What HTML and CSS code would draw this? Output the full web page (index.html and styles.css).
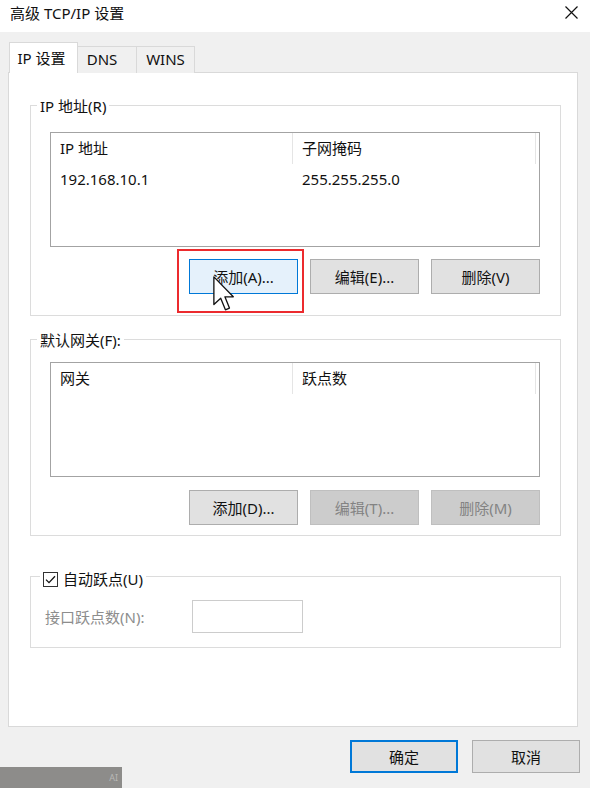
FILE: index.html
```html
<!DOCTYPE html>
<html>
  <head>
    <meta charset="utf-8" />
    <title>高级 TCP/IP 设置</title>
    <link rel="stylesheet" href="styles.css">
  </head>
  <body>
    <div class="window">
      <div class="titlebar">
        <span class="title">高级 TCP/IP 设置</span>
        <svg class="close" width="13" height="13" viewBox="0 0 13 13">
          <path d="M0.5 0.5 L12.5 12.5 M12.5 0.5 L0.5 12.5" stroke="#111" stroke-width="1.2" />
        </svg>
      </div>

      <div class="tabs">
        <div class="tab active">IP 设置</div>
        <div class="tab tab-dns">DNS</div>
        <div class="tab tab-wins">WINS</div>
      </div>

      <div class="panel">
        <div class="group group-ip">
          <div class="group-title"><span>IP 地址(R)</span></div>
          <div class="listview">
            <div class="lv-header">
              <div class="col">IP 地址</div>
              <div class="col">子网掩码</div>
            </div>
            <div class="lv-row">
              <div class="col">192.168.10.1</div>
              <div class="col">255.255.255.0</div>
            </div>
          </div>
          <div class="btn-row">
            <div class="btn-wrap">
              <button class="btn hot">添加(A)...</button>
              <div class="callout"></div>
              <svg class="cursor" width="21" height="35" viewBox="0 0 12 20">
                <path d="M0.5 0.5 V16.3 L4.4 12.7 L7.1 19.3 L9.4 18.3 L6.8 11.9 H11.6 Z" fill="#fff" stroke="#111" stroke-width="0.75" stroke-linejoin="round" />
              </svg>
            </div>
            <button class="btn">编辑(E)...</button>
            <button class="btn">删除(V)</button>
          </div>
        </div>

        <div class="group group-gw">
          <div class="group-title"><span>默认网关(F):</span></div>
          <div class="listview">
            <div class="lv-header">
              <div class="col">网关</div>
              <div class="col">跃点数</div>
            </div>
          </div>
          <div class="btn-row">
            <button class="btn">添加(D)...</button>
            <button class="btn" disabled>编辑(T)...</button>
            <button class="btn" disabled>删除(M)</button>
          </div>
        </div>

        <div class="group group-metric">
          <div class="group-title">
            <span class="check-label">
              <svg class="checkbox" width="15" height="15" viewBox="0 0 15 15">
                <rect x="0.5" y="0.5" width="14" height="14" fill="#fff" stroke="#333" />
                <path d="M3 7.6 L6 10.6 L12 4.2" fill="none" stroke="#111" stroke-width="1.3" />
              </svg>
              自动跃点(U)
            </span>
          </div>
          <div class="metric-row">
            <span class="metric-label">接口跃点数(N):</span>
            <div class="metric-input"></div>
          </div>
        </div>
      </div>

      <div class="footer">
        <button class="btn dlg default">确定</button>
        <button class="btn dlg">取消</button>
      </div>

      <div class="watermark"><span>AI</span></div>
    </div>
  </body>
</html>
```

FILE: styles.css
```css
body {
  margin: 0;
  background: #f0f0f0;
  font-family: "Noto Sans", "Noto Sans CJK SC", sans-serif;
  font-size: 15px;
  color: #111;
}
.window {
  position: relative;
  width: 590px;
  height: 788px;
  overflow: hidden;
}
.titlebar {
  height: 32px;
  background: #fff;
  display: flex;
  justify-content: space-between;
  align-items: flex-start;
}
.title {
  padding-left: 10px;
  line-height: 26px;
}
.close {
  margin: 6px 12px 0 0;
}

/* tabs */
.tabs {
  display: flex;
  align-items: flex-end;
  margin-top: 10px;
  margin-bottom: -1px;
  padding-left: 9px;
}
.tab {
  box-sizing: border-box;
  height: 27px;
  line-height: 25px;
  text-align: center;
  border-top: 1px solid #d9d9d9;
  border-right: 1px solid #d9d9d9;
  background: #f0f0f0;
}
.tab.active {
  position: relative;
  width: 69px;
  height: 31px;
  line-height: 30px;
  padding-right: 4px;
  background: #fff;
  border-left: 1px solid #d9d9d9;
}
.tab-dns {
  width: 59px;
  padding-right: 10px;
}
.tab-wins {
  width: 58px;
}

.panel {
  box-sizing: border-box;
  margin-left: 8px;
  width: 570px;
  height: 655px;
  background: #fff;
  border: 1px solid #d9d9d9;
  padding: 32px 16px 0 21px;
}

/* group boxes */
.group {
  border: 1px solid #dcdcdc;
  padding: 0 20px 21px 19px;
}
.group-title {
  display: flex;
  height: 21px;
  margin: -10px 0 0 -13px;
}
.group-title span {
  background: #fff;
  padding: 0 3px;
  line-height: 21px;
}
.group-gw {
  margin-top: 23px;
  padding-bottom: 10px;
}
.group-metric {
  margin-top: 40px;
  padding: 0 20px 14px 14px;
}
.group-metric .group-title {
  margin: -8px 0 0 -5px;
}
.check-label {
  display: flex;
  align-items: center;
  gap: 5px;
}

/* list views */
.listview {
  box-sizing: border-box;
  height: 115px;
  margin-top: 15px;
  border: 1px solid #a3a3a3;
}
.group-gw .listview {
  margin-top: 11px;
}
.lv-header,
.lv-row {
  display: flex;
}
.lv-header .col {
  height: 31px;
  line-height: 31px;
  border-right: 1px solid #e5e5e5;
}
.lv-row .col {
  height: 30px;
  line-height: 30px;
}
.col {
  box-sizing: border-box;
  width: 242px;
  padding-left: 9px;
}
.lv-header .col:nth-child(2) {
  width: 243px;
}

/* buttons */
.btn-row {
  display: flex;
  justify-content: flex-end;
  gap: 12px;
  margin-top: 12px;
}
.group-gw .btn-row {
  margin-top: 13px;
}
.btn-wrap {
  position: relative;
}
.btn {
  box-sizing: border-box;
  width: 109px;
  height: 35px;
  padding: 0;
  font: inherit;
  color: #111;
  background: #e1e1e1;
  border: 1px solid #adadad;
}
.btn.hot {
  background: #e5f1fb;
  border-color: #0078d7;
}
.btn:disabled {
  background: #cccccc;
  border-color: #bfbfbf;
  color: #838383;
}
.callout {
  position: absolute;
  top: -10px;
  left: -12px;
  right: -6px;
  bottom: -19px;
  border: 2px solid #ec2b2e;
}
.cursor {
  position: absolute;
  left: 24px;
  top: 17px;
}

.metric-row {
  display: flex;
  align-items: center;
  margin-top: 10px;
}
.metric-label {
  width: 147px;
  color: #8d8d8d;
}
.metric-input {
  box-sizing: border-box;
  width: 111px;
  height: 33px;
  border: 1px solid #cccccc;
  background: #fff;
}

.footer {
  display: flex;
  justify-content: flex-end;
  gap: 14px;
  margin-top: 13px;
  padding-right: 10px;
}
.btn.dlg {
  width: 108px;
  height: 33px;
}
.btn.default {
  border: 2px solid #0078d7;
}

.watermark {
  position: absolute;
  left: 0;
  bottom: 0;
  width: 122px;
  height: 21px;
  background: #8d8c8a;
}
.watermark span {
  position: absolute;
  right: 4px;
  top: 4px;
  font-size: 9px;
  color: #b8b8b6;
}
```
